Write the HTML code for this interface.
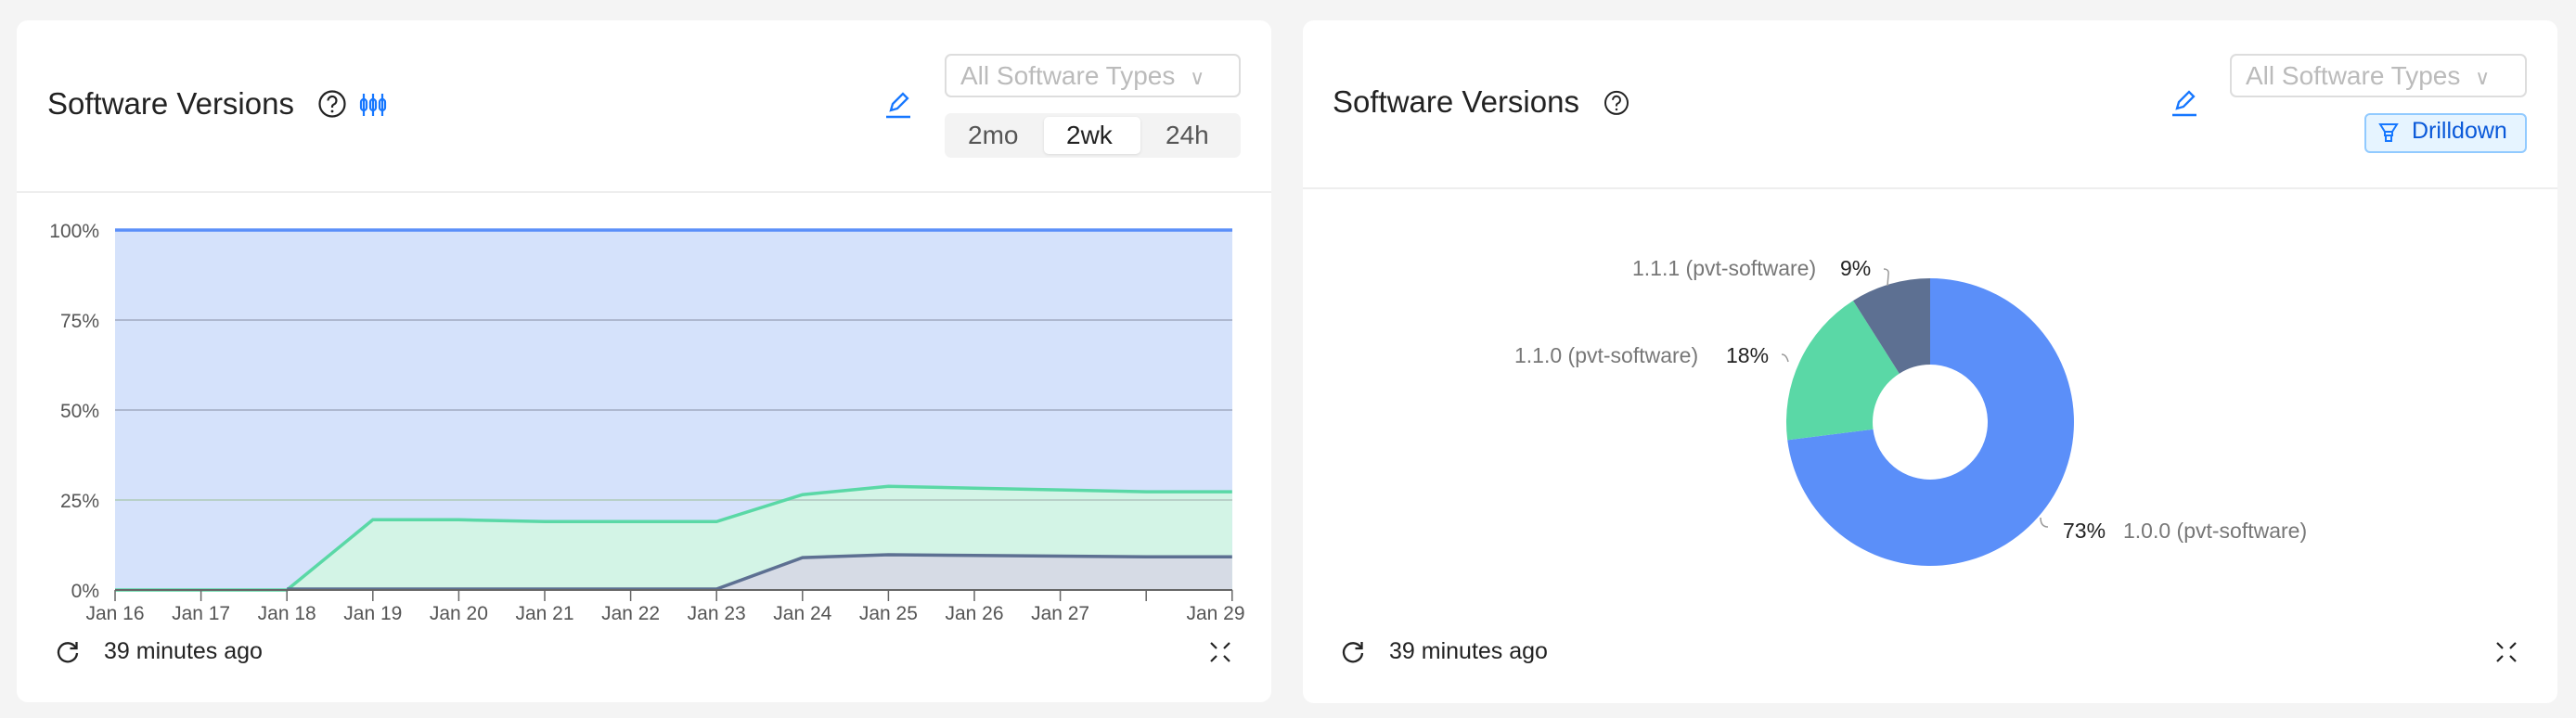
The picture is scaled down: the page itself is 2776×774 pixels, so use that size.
<!DOCTYPE html>
<html><head><meta charset="utf-8"><style>
*{margin:0;padding:0;box-sizing:border-box}
body{width:2776px;height:774px;background:#f4f4f4;font-family:"Liberation Sans",Arial,sans-serif;position:relative;overflow:hidden;color:#222}
.card{position:absolute;background:#fff;border-radius:12px}
.abs{position:absolute;white-space:nowrap}
.title{font-size:33px;color:#222}
.dd{position:absolute;border:2px solid #ddd;border-radius:7px;color:#bbb;font-size:28px;padding-left:15px;line-height:43px}
.foot{font-size:25px;color:#222}
</style></head><body>
<div class="card" style="left:18px;top:22px;width:1352px;height:735px"></div>
<div class="card" style="left:1404px;top:22px;width:1352px;height:736px"></div>
<div class="abs" style="left:18px;top:206px;width:1352px;height:2px;background:#eee"></div>
<div class="abs" style="left:1404px;top:202px;width:1352px;height:2px;background:#eee"></div>

<div class="abs title" style="left:51px;top:93px">Software Versions</div>
<svg class="abs" style="left:340px;top:93px" width="80" height="40" viewBox="0 0 80 40">
<circle cx="18" cy="19" r="13.5" fill="none" stroke="#222" stroke-width="2.2"/>
<path d="M13.5 15.5a4.5 4.5 0 1 1 6 4.2c-1 .5-1.5 1.2-1.5 2.3v1" fill="none" stroke="#222" stroke-width="2.2"/><circle cx="18" cy="27" r="1.4" fill="#222"/>
<g stroke="#1677ff" stroke-width="2.2" fill="none">
<path d="M52 8v24M62 8v24M72 8v24"/>
<rect x="49" y="14" width="6" height="12" rx="3"/><rect x="59" y="14" width="6" height="12" rx="3"/><rect x="69" y="14" width="6" height="12" rx="3"/>
</g></svg>
<svg class="abs" style="left:950px;top:94px" width="36" height="36" viewBox="0 0 36 36"><path d="M10 25l2-7 11-11 5 5-11 11z" fill="none" stroke="#1677ff" stroke-width="2.3"/><path d="M5 32h26" stroke="#1677ff" stroke-width="2.5"/></svg>
<div class="dd" style="left:1018px;top:58px;width:319px;height:47px">All Software Types <span style="font-size:22px;margin-left:8px">∨</span></div>
<div class="abs" style="left:1018px;top:122px;width:319px;height:48px;background:#f3f3f3;border-radius:7px"></div>
<div class="abs" style="left:1125px;top:126px;width:104px;height:40px;background:#fff;border-radius:5px;box-shadow:0 1px 3px rgba(0,0,0,.1)"></div>
<div class="abs" style="left:1043px;top:130px;font-size:28px;color:#555">2mo</div>
<div class="abs" style="left:1149px;top:130px;font-size:28px;color:#222">2wk</div>
<div class="abs" style="left:1256px;top:130px;font-size:28px;color:#555">24h</div>

<svg class="abs" style="left:0;top:0" width="1400" height="774">
<rect x="124" y="248" width="1204" height="388" fill="#d5e2fb"/>
<g stroke="#aeb8cf" stroke-width="2"><path d="M124 345H1328M124 442H1328M124 539H1328"/></g>
<path d="M124 636L216.6 636L309.2 636L401.8 560.3L494.4 560.3L587 562.3L679.6 562.3L772.2 562.3L864.8 533.2L957.4 524.3L1050 526.2L1142.6 528.1L1235.2 530.1L1327.8 530.1L1327.8 636Z" fill="#d3f4e6"/>
<path d="M124 539H1328" stroke="#b8d0c8" stroke-width="2"/>
<path d="M772.2 636L864.8 601.1L957.4 598L1050 598.8L1142.6 599.5L1235.2 600.3L1327.8 600.3L1327.8 636Z" fill="#d6dbe5"/>
<path d="M124 248H1328" stroke="#5b8ff9" stroke-width="3.5"/>
<path d="M124 636L216.6 636L309.2 636L401.8 560.3L494.4 560.3L587 562.3L679.6 562.3L772.2 562.3L864.8 533.2L957.4 524.3L1050 526.2L1142.6 528.1L1235.2 530.1L1327.8 530.1" fill="none" stroke="#5ad8a6" stroke-width="3.5"/>
<path d="M309.2 635L772.2 635L864.8 601.1L957.4 598L1050 598.8L1142.6 599.5L1235.2 600.3L1327.8 600.3" fill="none" stroke="#5d7092" stroke-width="3.5"/>
<path d="M124 636H1328" stroke="#666" stroke-width="2"/>
<g stroke="#666" stroke-width="1.5"><path d="M124 636v12M216.6 636v12M309.2 636v12M401.8 636v12M494.4 636v12M587 636v12M679.6 636v12M772.2 636v12M864.8 636v12M957.4 636v12M1050 636v12M1142.6 636v12M1235.2 636v12M1327.8 636v12"/></g>
<g font-family="Liberation Sans,Arial,sans-serif" font-size="21" fill="#555" text-anchor="end">
<text x="107" y="256">100%</text><text x="107" y="353">75%</text><text x="107" y="450">50%</text><text x="107" y="547">25%</text><text x="107" y="644">0%</text></g>
<g font-family="Liberation Sans,Arial,sans-serif" font-size="21" fill="#555" text-anchor="middle">
<text x="124" y="668">Jan 16</text><text x="216.6" y="668">Jan 17</text><text x="309.2" y="668">Jan 18</text><text x="401.8" y="668">Jan 19</text><text x="494.4" y="668">Jan 20</text><text x="587" y="668">Jan 21</text><text x="679.6" y="668">Jan 22</text><text x="772.2" y="668">Jan 23</text><text x="864.8" y="668">Jan 24</text><text x="957.4" y="668">Jan 25</text><text x="1050" y="668">Jan 26</text><text x="1142.6" y="668">Jan 27</text><text x="1310" y="668">Jan 29</text></g>
</svg>
<svg class="abs" style="left:59px;top:689px" width="28" height="28" viewBox="0 0 28 28"><path d="M22.5 9A10 10 0 1 0 24 15" fill="none" stroke="#222" stroke-width="2.3"/><path d="M23.5 3v7h-7" fill="none" stroke="#222" stroke-width="2.3"/></svg>
<div class="abs foot" style="left:112px;top:688px">39 minutes ago</div>
<svg class="abs" style="left:1302px;top:690px" width="26" height="26" viewBox="0 0 26 26" fill="none" stroke="#222" stroke-width="2.2"><path d="M3 3l6 6M23 3l-6 6M3 23l6-6M23 23l-6-6"/></svg>

<div class="abs title" style="left:1436px;top:91px">Software Versions</div>
<svg class="abs" style="left:1726px;top:94px" width="32" height="32" viewBox="0 0 36 36"><circle cx="18" cy="19" r="13.5" fill="none" stroke="#222" stroke-width="2.2"/><path d="M13.5 15.5a4.5 4.5 0 1 1 6 4.2c-1 .5-1.5 1.2-1.5 2.3v1" fill="none" stroke="#222" stroke-width="2.2"/><circle cx="18" cy="27" r="1.4" fill="#222"/></svg>
<svg class="abs" style="left:2336px;top:92px" width="36" height="36" viewBox="0 0 36 36"><path d="M10 25l2-7 11-11 5 5-11 11z" fill="none" stroke="#1677ff" stroke-width="2.3"/><path d="M5 32h26" stroke="#1677ff" stroke-width="2.5"/></svg>
<div class="dd" style="left:2403px;top:58px;width:320px;height:47px">All Software Types <span style="font-size:22px;margin-left:8px">∨</span></div>
<div class="abs" style="left:2548px;top:122px;width:175px;height:43px;background:#e6f4ff;border:2px solid #91caff;border-radius:6px"></div>
<svg class="abs" style="left:2563px;top:131px" width="22" height="26" viewBox="0 0 22 26" fill="none" stroke="#1677ff" stroke-width="2"><path d="M2 3h18l-5 8H7z M7 11h8v4H7z M8 15h6v6H8z"/></svg>
<div class="abs" style="left:2599px;top:127px;font-size:25px;color:#0958d9">Drilldown</div>

<svg class="abs" style="left:0;top:0" width="2776" height="774">
<path d="M2080 300A155 155 0 1 1 1926.2 474.4L2018.5 462.8A62 62 0 1 0 2080 393Z" fill="#5b8ff9"/>
<path d="M1926.2 474.4A155 155 0 0 1 1997 324.1L2046.8 402.7A62 62 0 0 0 2018.5 462.8Z" fill="#5ad8a6"/>
<path d="M1997 324.1A155 155 0 0 1 2080 300L2080 393A62 62 0 0 0 2046.8 402.7Z" fill="#5d7092"/>
<g fill="none" stroke="#999" stroke-width="1.5">
<path d="M2030 290q6 0 5 6l-1 12"/><path d="M1920 382q5 0 7 8"/><path d="M2199 558q0 10 8 10"/></g>
<g font-family="Liberation Sans,Arial,sans-serif" font-size="23">
<text x="1759" y="297" fill="#777">1.1.1 (pvt-software)</text><text x="1983" y="297" fill="#222">9%</text>
<text x="1632" y="391" fill="#777">1.1.0 (pvt-software)</text><text x="1860" y="391" fill="#222">18%</text>
<text x="2223" y="580" fill="#222">73%</text><text x="2288" y="580" fill="#777">1.0.0 (pvt-software)</text></g>
</svg>
<svg class="abs" style="left:1444px;top:689px" width="28" height="28" viewBox="0 0 28 28"><path d="M22.5 9A10 10 0 1 0 24 15" fill="none" stroke="#222" stroke-width="2.3"/><path d="M23.5 3v7h-7" fill="none" stroke="#222" stroke-width="2.3"/></svg>
<div class="abs foot" style="left:1497px;top:688px">39 minutes ago</div>
<svg class="abs" style="left:2688px;top:690px" width="26" height="26" viewBox="0 0 26 26" fill="none" stroke="#222" stroke-width="2.2"><path d="M3 3l6 6M23 3l-6 6M3 23l6-6M23 23l-6-6"/></svg>
</body></html>
